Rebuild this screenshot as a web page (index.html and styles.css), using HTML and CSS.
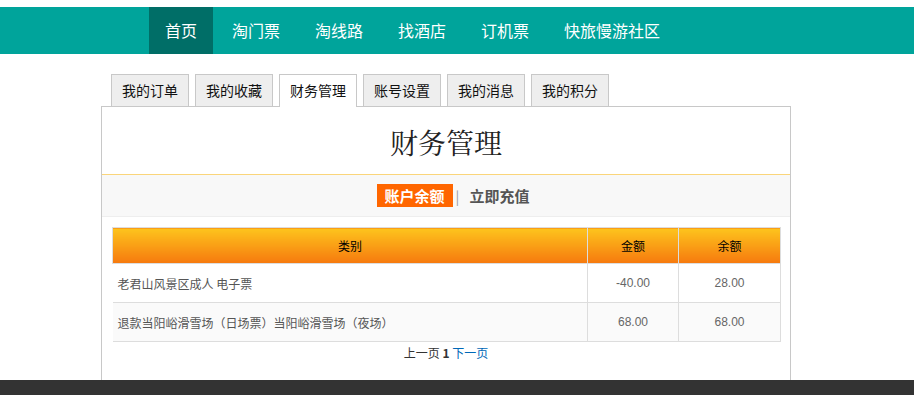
FILE: index.html
```html
<!DOCTYPE html>
<html lang="zh-CN">
<head>
  <meta charset="UTF-8">
  <title>财务管理</title>
  <link rel="stylesheet" href="styles.css">
</head>
<body>
  <div class="nav">
    <ul class="nav-list">
      <li class="active"><a href="#">首页</a></li>
      <li><a href="#">淘门票</a></li>
      <li><a href="#">淘线路</a></li>
      <li><a href="#">找酒店</a></li>
      <li><a href="#">订机票</a></li>
      <li><a href="#">快旅慢游社区</a></li>
    </ul>
  </div>

  <div class="main">
    <ul class="tabs">
      <li><a href="#">我的订单</a></li>
      <li><a href="#">我的收藏</a></li>
      <li class="current"><a href="#">财务管理</a></li>
      <li><a href="#">账号设置</a></li>
      <li><a href="#">我的消息</a></li>
      <li><a href="#">我的积分</a></li>
    </ul>

    <div class="panel">
      <h2 class="panel-title">财务管理</h2>

      <div class="sub-nav">
        <a href="#" class="sub-on">账户余额</a>
        <span class="sep">|</span>
        <a href="#" class="sub-link">立即充值</a>
      </div>

      <table class="money-table">
        <colgroup>
          <col class="col-type">
          <col class="col-amount">
          <col class="col-balance">
        </colgroup>
        <thead>
          <tr>
            <th>类别</th>
            <th>金额</th>
            <th>余额</th>
          </tr>
        </thead>
        <tbody>
          <tr>
            <td class="type">老君山风景区成人 电子票</td>
            <td class="num">-40.00</td>
            <td class="num">28.00</td>
          </tr>
          <tr class="even">
            <td class="type">退款当阳峪滑雪场（日场票）当阳峪滑雪场（夜场）</td>
            <td class="num">68.00</td>
            <td class="num">68.00</td>
          </tr>
        </tbody>
      </table>

      <div class="pager">
        <span>上一页</span> <b>1</b> <a href="#">下一页</a>
      </div>
    </div>
  </div>

  <div class="footer"></div>
</body>
</html>
```

FILE: styles.css
```css
* {
  margin: 0;
  padding: 0;
  box-sizing: border-box;
}

body {
  font-family: "Noto Sans CJK SC", "Liberation Sans", sans-serif;
  background: #fff;
  color: #333;
}

ul {
  list-style: none;
}

a {
  text-decoration: none;
}

/* top nav */
.nav {
  margin-top: 7px;
  height: 47px;
  background-color: #00a49b;
  padding-left: 149px;
}

.nav-list {
  display: flex;
  gap: 3px;
  height: 100%;
}

.nav-list li a {
  display: block;
  height: 47px;
  line-height: 47px;
  padding: 0 16px;
  color: #fff;
  font-size: 16px;
}

.nav-list li.active a {
  background-color: #006e67;
}

/* content */
.main {
  margin-top: 20px;
  padding-left: 101px;
  width: 791px;
}

.tabs {
  display: flex;
  gap: 6px;
  padding-left: 10px;
  height: 32px;
  position: relative;
  z-index: 1;
}

.tabs li a {
  display: block;
  width: 78px;
  height: 32px;
  line-height: 30px;
  text-align: center;
  font-size: 14px;
  color: #111;
  background: #eee;
  border: 1px solid #c8c8c8;
  border-bottom: none;
}

.tabs li.current a {
  background: #fff;
  height: 33px;
}

.panel {
  width: 690px;
  height: 274px;
  border: 1px solid #c8c8c8;
  border-bottom: none;
  padding: 0 10px 0 10px;
}

.panel-title {
  margin: 0 -10px;
  height: 68px;
  line-height: 70px;
  text-align: center;
  font-family: "Noto Serif CJK SC", "Noto Sans CJK SC", serif;
  font-weight: normal;
  font-size: 28px;
  color: #222;
  border-bottom: 1px solid #fad57a;
}

.sub-nav {
  margin: 0 -10px;
  padding-left: 14px;
  height: 42px;
  background: #f8f8f8;
  border-bottom: 1px solid #eee;
  display: flex;
  justify-content: center;
  align-items: center;
  font-size: 15px;
  font-weight: bold;
}

.sub-on {
  background: #ff6600;
  color: #fff;
  padding: 0 8px;
  height: 23px;
  line-height: 23px;
}

.sep {
  color: #999;
  font-weight: normal;
  font-size: 14px;
  margin: 0 10px 0 3px;
}

.sub-link {
  color: #555;
}

.money-table {
  margin-top: 10px;
  width: 668px;
  table-layout: fixed;
  border-collapse: collapse;
  font-size: 12px;
}

.col-type {
  width: 475px;
}

.col-amount {
  width: 91px;
}

.col-balance {
  width: 102px;
}

.money-table th {
  height: 36px;
  font-weight: normal;
  color: #000;
  border: 1px solid #ddd;
  background: linear-gradient(#fdc41d, #f6790e);
}

.money-table td {
  height: 39px;
  border: 1px solid #ddd;
  color: #555;
}

.money-table td.type {
  border-left: none;
  padding-left: 5px;
}

.money-table td.num {
  text-align: center;
  font-family: "Liberation Sans", Arial, sans-serif;
  color: #666;
}

.money-table tr.even td {
  background: #fafafa;
}

.pager {
  text-align: center;
  font-size: 12px;
  margin-top: 2px;
  line-height: 18px;
  color: #333;
}

.pager a {
  color: #0068b7;
}

.footer {
  height: 15px;
  background: #333;
}
```
